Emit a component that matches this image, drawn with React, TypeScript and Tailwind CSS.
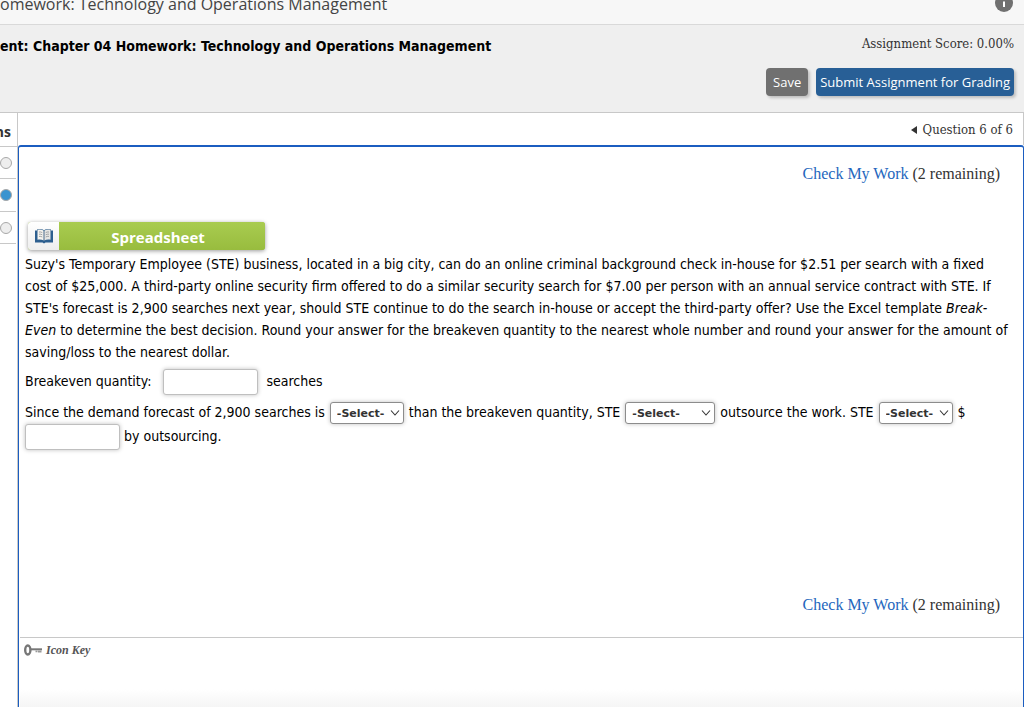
import React from 'react';
import { clsx } from 'clsx';

interface BlankSelectProps {
  label: string;
  options: string[];
  className: string;
}

const BlankSelect: React.FC<BlankSelectProps> = ({ label, options, className }) => (
  <span className="relative mx-px inline-block align-baseline">
    <select
      aria-label={label}
      defaultValue=""
      className={clsx(
        'block h-[22px] appearance-none rounded-[3px] border border-[#8c8c8c] bg-white pl-[6px] font-["DejaVu_Sans",sans-serif] text-[11px] font-bold text-[#333] shadow-[0_0_4px_rgba(0,0,0,0.25)]',
        className,
      )}
    >
      <option value="">-Select-</option>
      {options.map(option => (
        <option key={option}>{option}</option>
      ))}
    </select>
    <svg
      className="pointer-events-none absolute top-[7px] right-1 h-2 w-[10px]"
      viewBox="0 0 10 8"
      fill="none"
      stroke="#333"
      strokeWidth="1.1"
    >
      <path d="M1 1.500 5 6l4-4.500" />
    </svg>
  </span>
);

const BlankInput: React.FC<{ label: string }> = ({ label }) => (
  <input
    type="text"
    aria-label={label}
    className="h-[26px] w-[95px] rounded-[3px] border border-[#bfbfbf] bg-white px-1 align-middle shadow-[0_0_4px_rgba(0,0,0,0.25)]"
  />
);

const CheckMyWork: React.FC = () => (
  <div className="pr-[23px] text-right font-['Liberation_Serif',serif] text-base leading-6 text-[#333]">
    <a href="#check" className="text-[#2466bd]">Check My Work</a> (2 remaining)
  </div>
);

const BookIcon: React.FC = () => (
  <svg className="h-4 w-[18px]" viewBox="0 0 18 16">
    <path d="M0 2.500h2V1.500c3-.8 5-.5 7 .7 2-1.200 4-1.500 7-.7v1h2v12h-7.500l-1.500 1-1.500-1H0z" fill="#2d5f8f" />
    <path d="M2.500 1.800C5 1.200 7 1.500 8.700 2.700v9.800C7 11.500 5 11.200 2.500 11.700z" fill="#f5f3ee" />
    <path d="M15.500 1.800C13 1.200 11 1.500 9.300 2.700v9.800c1.700-1 3.700-1.300 6.200-.8z" fill="#e6e6e4" />
    <path
      d="M4 4c1.300-.2 2.300 0 3.300.6M4 6.200c1.300-.2 2.300 0 3.300.6M4 8.400c1.300-.2 2.300 0 3.300.6M14 4c-1.300-.2-2.300 0-3.300.6M14 6.200c-1.300-.2-2.300 0-3.300.6M14 8.400c-1.300-.2-2.300 0-3.300.6"
      fill="none"
      stroke="#8d9094"
      strokeWidth=".8"
    />
    <path d="M9 2.500v10" stroke="#6c7f92" strokeWidth=".7" />
  </svg>
);

const KeyIcon: React.FC = () => (
  <svg className="h-3 w-[19px]" viewBox="0 0 19 12" fill="none">
    <ellipse cx="3.800" cy="6" rx="2.600" ry="4.500" stroke="#777" strokeWidth="2.400" />
    <path d="M6.500 5.300H18" stroke="#777" strokeWidth="2" />
    <path d="M11.500 7.300h2M14 7.500h3.500" stroke="#999" strokeWidth="1.800" />
  </svg>
);

const questions = [
  { id: 4, current: false },
  { id: 5, current: true },
  { id: 6, current: false },
];

const App: React.FC = () => {
  return (
    <div className="flex min-h-screen flex-col overflow-hidden bg-white font-['Open_Sans',sans-serif] text-[#333]">
      <div className="flex h-[25px] items-start justify-between border-b border-[#d9d9d9] bg-[#f7f7f7] pr-[11px]">
        <div className="-mt-2 text-base leading-6 whitespace-nowrap text-[#444]">
          omework: Technology and Operations Management
        </div>
        <button type="button" aria-label="Information" className="-mt-[6px]">
          <svg className="h-[18px] w-[18px]" viewBox="0 0 18 18">
            <circle cx="9" cy="9" r="9" fill="#707070" />
            <path d="M8 7.500h2v5.500H8zM8 4h2v2H8z" fill="#fff" />
          </svg>
        </button>
      </div>

      <header className="flex h-[88px] justify-between border-b border-[#c8c8c8] bg-[#efefef] pr-[10px]">
        <h1 className="pt-[11px] font-['DejaVu_Sans_Condensed','DejaVu_Sans',sans-serif] text-sm leading-5 font-bold whitespace-nowrap text-black">
          ent: Chapter 04 Homework: Technology and Operations Management
        </h1>
        <div className="flex flex-col items-end gap-[14px] pt-[9px]">
          <div className="font-['DejaVu_Serif_Condensed','DejaVu_Serif',serif] text-[13px] leading-5">
            Assignment Score: 0.00%
          </div>
          <div className="flex gap-2">
            <button type="button" className="h-7 rounded-[4px] bg-[#707070] px-[7px] pt-px text-[13px] text-white shadow-[2px_2px_3px_rgba(0,0,0,0.2)]">
              Save
            </button>
            <button type="button" className="h-7 rounded-[4px] bg-[#285f96] px-1 pt-px text-[13px] text-white shadow-[2px_2px_3px_rgba(0,0,0,0.2)]">
              Submit Assignment for Grading
            </button>
          </div>
        </div>
      </header>

      <div className="flex flex-1">
        <aside className="w-[17px] shrink-0">
          <div className="flex h-[34px] items-center justify-end border-b border-[#c8c8c8] pt-1 pr-[6px] text-sm font-bold">ns</div>
          <ul className="mr-px">
            {questions.map(question => (
              <li key={question.id} className="flex h-[32px] items-center border-b border-[#c8c8c8] nth-2:h-[33px]">
                <button
                  type="button"
                  aria-label={`Question ${question.id}`}
                  className={clsx(
                    'h-3 w-3 rounded-full border border-[#a8a8a8]',
                    question.current ? 'bg-[#3a94d0]' : 'bg-[#eee]',
                  )}
                />
              </li>
            ))}
          </ul>
        </aside>

        <main className="flex min-w-0 flex-1 flex-col border-l border-[#c8c8c8]">
          <nav className="flex h-8 items-center justify-end gap-[6px] border-r border-[#c8c8c8] pt-px pr-[10px] font-['DejaVu_Serif_Condensed','DejaVu_Serif',serif] text-[13px]">
            <a href="#previous" aria-label="Previous question">
              <svg className="h-2 w-[6px]" viewBox="0 0 6 8">
                <path d="M6 0v8L0 4z" fill="#333" />
              </svg>
            </a>
            Question 6 of 6
          </nav>

          <section className="flex flex-1 flex-col rounded-t-[3px] border-t-2 border-r border-l border-[#1b5dc0]">
            <div className="pt-[15px]">
              <CheckMyWork />
            </div>

            <a
              href="#spreadsheet"
              className="mt-9 ml-[9px] flex h-[28px] w-[237px] rounded-[3px] bg-[#a0c445] shadow-[0_1px_4px_rgba(0,0,0,0.4)]"
            >
              <span className="flex w-[31px] items-center justify-center rounded-l-[3px] bg-linear-to-b from-white to-[#eee]">
                <BookIcon />
              </span>
              <span className="flex-1 rounded-r-[3px] bg-linear-to-b from-[#a9cc50] to-[#98bc3e] pt-[3px] pr-2 text-center text-[15px] leading-6 font-bold text-white">
                Spreadsheet
              </span>
            </a>

            <div className="pt-[3px] pr-1 pl-[6px] font-['DejaVu_Sans_Condensed','DejaVu_Sans',sans-serif] text-sm leading-[22px] text-black">
              <p>
                Suzy's Temporary Employee (STE) business, located in a big city, can do an online criminal background
                check in-house for $2.51 per search with a fixed
                <br />
                cost of $25,000. A third-party online security firm offered to do a similar security search for $7.00
                per person with an annual service contract with STE. If
                <br />
                STE's forecast is 2,900 searches next year, should STE continue to do the search in-house or accept the
                third-party offer? Use the Excel template <i>Break-</i>
                <br />
                <i>Even</i> to determine the best decision. Round your answer for the breakeven quantity to the nearest
                whole number and round your answer for the amount of
                <br />
                saving/loss to the nearest dollar.
              </p>
              <p className="mt-[6px]">
                Breakeven quantity: &nbsp; <BlankInput label="Breakeven quantity" />&nbsp; searches
              </p>
              <p className="mt-[6px]">
                Since the demand forecast of 2,900 searches is{' '}
                <BlankSelect label="Comparison" options={['less', 'more']} className="w-[74px]" /> than the breakeven
                quantity, STE{' '}
                <BlankSelect label="Decision" options={['should', 'should not']} className="w-[90px]" /> outsource the
                work. STE <BlankSelect label="Result" options={['saves', 'loses']} className="w-[74px]" /> ${' '}
                <BlankInput label="Amount" /> by outsourcing.
              </p>
            </div>

            <div className="pt-[143px] pb-5">
              <CheckMyWork />
            </div>

            <footer className="ml-px flex flex-1 flex-col justify-between border-t border-[#c8c8c8]">
              <a
                href="#icon-key"
                className="flex items-center gap-[3px] pt-1 pl-1 font-['Liberation_Serif',serif] text-xs leading-4 font-bold text-[#555] italic"
              >
                <KeyIcon />
                Icon Key
              </a>
              <div className="h-[18px] bg-linear-to-b from-white to-[#f5f5f5]" />
            </footer>
          </section>
        </main>
      </div>
    </div>
  );
};

export default App;
